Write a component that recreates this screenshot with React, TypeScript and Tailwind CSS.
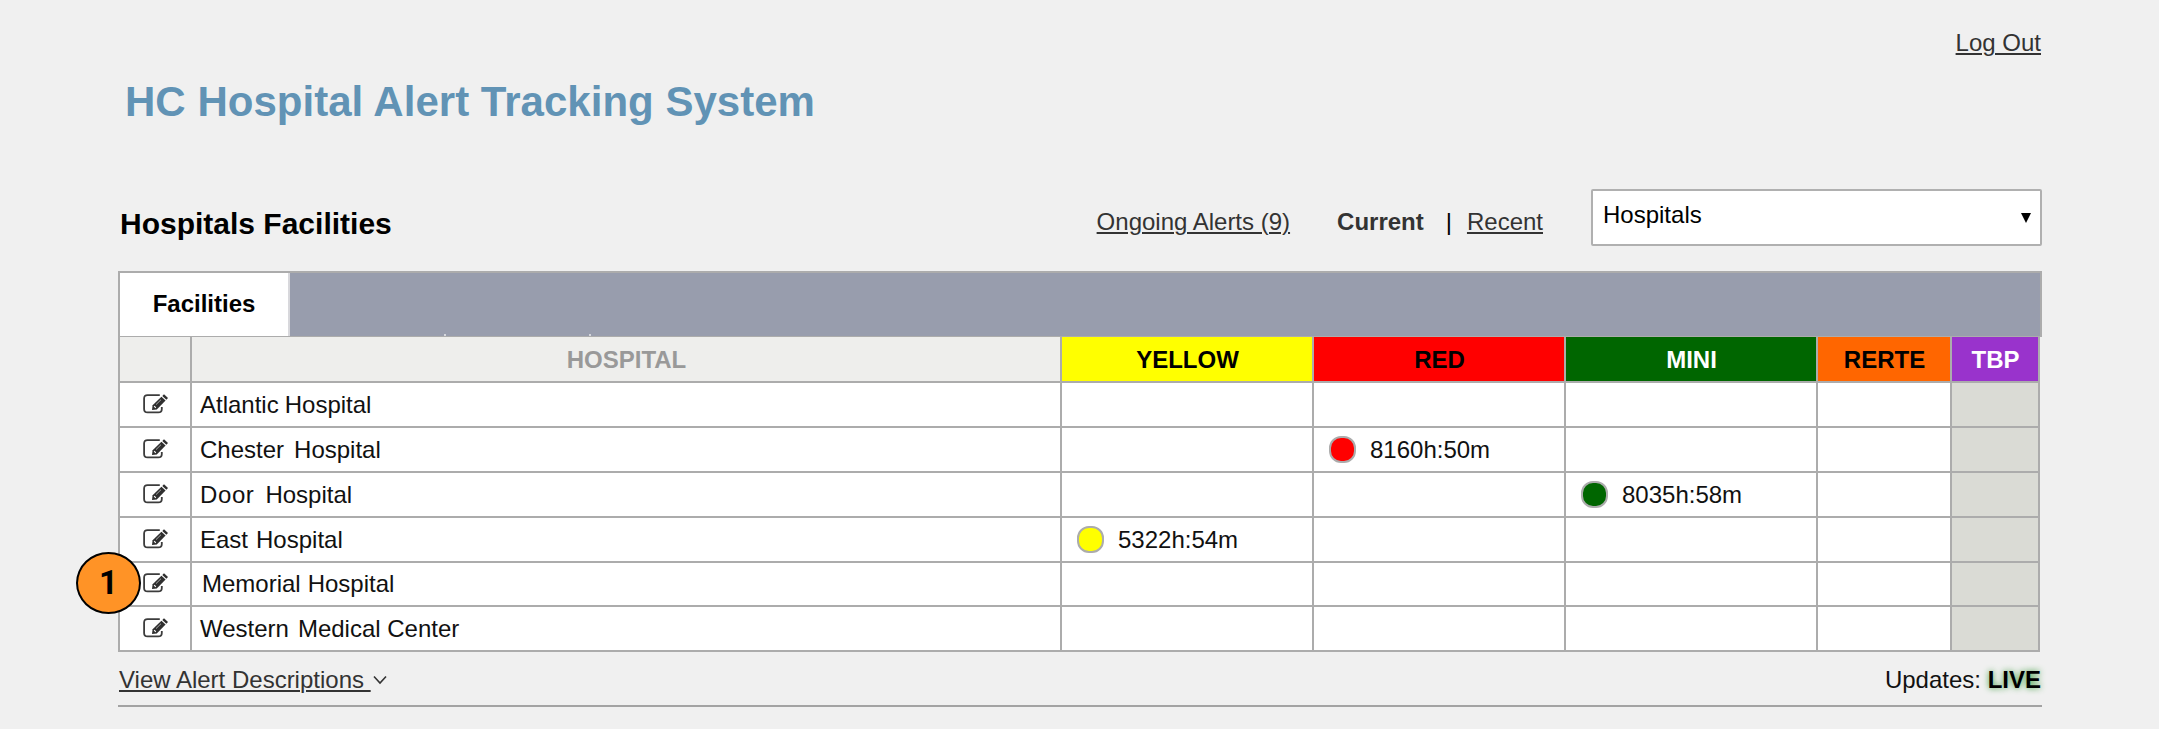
import React from "react";

type Level = "yellow" | "red" | "mini";

interface Facility {
  words: [string, string];
  gap: string;
  indent: string;
  alert?: { level: Level; time: string };
}

const facilities: Facility[] = [
  { words: ["Atlantic", "Hospital"], gap: "gap-[6px]", indent: "pl-[8px]" },
  { words: ["Chester", "Hospital"], gap: "gap-[10px]", indent: "pl-[8px]", alert: { level: "red", time: "8160h:50m" } },
  { words: ["Door", "Hospital"], gap: "gap-[11px]", indent: "pl-[8px] [&>span:first-child]:tracking-[0.6px]", alert: { level: "mini", time: "8035h:58m" } },
  { words: ["East", "Hospital"], gap: "gap-[8px]", indent: "pl-[8px]", alert: { level: "yellow", time: "5322h:54m" } },
  { words: ["Memorial", "Hospital"], gap: "gap-[7px]", indent: "pl-[10px]" },
  { words: ["Western", "Medical Center"], gap: "gap-[9px]", indent: "pl-[8px]" },
];

const rowHeights = ["h-[45px]", "h-[45px]", "h-[45px]", "h-[45px]", "h-[44px]", "h-[45px]"];

const dotColor: Record<Level, string> = {
  yellow: "bg-[#ffff00]",
  red: "bg-[#ff0000]",
  mini: "bg-[#006600]",
};

const columns = "grid grid-cols-[72px_870px_252px_252px_252px_134px_88px]";
const cell = "flex items-center border-r-2 border-b-2 border-[#acacac]";

function EditIcon() {
  return (
    <svg width="26" height="20" viewBox="0 0 26 20" fill="none">
      <path
        d="M16.8 1.1H4.6Q1.1 1.1 1.1 4.6V14.9Q1.1 18.4 4.6 18.4H15.3Q18.8 18.4 18.8 14.9V13"
        stroke="#3c3c3c"
        strokeWidth="1.8"
      />
      <path d="M9 16L9.6 11.2L18.4 2.7L22.6 6.6L13.8 15.4Z" fill="#2f2f2f" />
      <path d="M19.3 1.9L21 0.2L25 3.9L23.4 5.7Z" fill="#2f2f2f" />
      <path d="M11.2 12.2L12.8 13.8" stroke="#fff" strokeWidth="1.2" />
      <path d="M13 10.6L18 5.7" stroke="#ddd" strokeWidth="0.7" />
    </svg>
  );
}

function AlertCell({ level, facility }: { level: Level; facility: Facility }) {
  const alert = facility.alert;
  return (
    <div className={`${cell} bg-white pl-[15px]`}>
      {alert && alert.level === level && (
        <>
          <span className={`h-[27px] w-[27px] rounded-[12px] border-2 border-[#acacac] ${dotColor[level]}`} />
          <span className="pl-[14px]">{alert.time}</span>
        </>
      )}
    </div>
  );
}

export default function App() {
  return (
    <div className="h-[729px] w-[2159px] overflow-hidden bg-[#f0f0f0] pr-[117px] pl-[118px] font-['Liberation_Sans',Arial,sans-serif] text-[24px] leading-[28px] text-[#111]">
      <div className="flex h-[70px] justify-end pt-[29px] pr-px">
        <a className="h-7 text-[#333] underline decoration-2 underline-offset-2">Log Out</a>
      </div>
      <h1 className="h-[119px] pt-[8px] pl-[7px] text-[42px] leading-[48px] font-bold tracking-[0.02px] text-[#6193b5]">
        HC Hospital Alert Tracking System
      </h1>

      <div className="flex h-[82px] items-start">
        <h2 className="pt-[18px] pl-[2px] text-[30px] leading-[34px] font-bold text-black">Hospitals Facilities</h2>
        <div className="ml-auto flex pt-[19px] text-[#333]">
          <a className="mr-[47px] underline decoration-2 underline-offset-2">Ongoing Alerts (9)</a>
          <span className="mr-[22px] font-bold">Current</span>
          <span className="mr-[15px] text-black">|</span>
          <a className="mr-[48px] underline decoration-2 underline-offset-2">Recent</a>
        </div>
        <div className="flex h-[57px] w-[451px] justify-between rounded-[2px] border-2 border-[#b0b0b0] bg-white pt-[10px] pr-[9px] pl-[10px] text-black">
          <span>Hospitals</span>
          <svg className="mt-[12px]" width="10" height="10" viewBox="0 0 10 10">
            <path d="M0 0H10L5 10Z" fill="#000" />
          </svg>
        </div>
      </div>

      <div className="flex h-[66px] border-2 border-b-[1px] border-[#acacac] bg-[#989dad]">
        <div className="flex w-[170px] items-center justify-center border-r-2 border-[#d8d8dc] bg-white pb-[2px] font-bold text-black">
          Facilities
        </div>
        <span className="mt-auto ml-[154px] h-[2px] w-[2px] bg-[#d5d7dd]" />
        <span className="mt-auto ml-[143px] h-[2px] w-[2px] bg-[#d5d7dd]" />
      </div>

      <div className="w-[1922px] border-l-2 border-[#acacac]">
        <div className={`${columns} h-[46px] text-center font-bold text-black [&>div]:pt-[2px] [&>div]:pl-px`}>
          <div className={`${cell} bg-[#eeeeec]`} />
          <div className={`${cell} justify-center bg-[#eeeeec] text-[#999]`}>HOSPITAL</div>
          <div className={`${cell} justify-center bg-[#ffff00]`}>YELLOW</div>
          <div className={`${cell} justify-center bg-[#ff0000]`}>RED</div>
          <div className={`${cell} justify-center bg-[#006600] text-white`}>MINI</div>
          <div className={`${cell} justify-center bg-[#ff6600]`}>RERTE</div>
          <div className={`${cell} justify-center bg-[#9933cc] text-white`}>TBP</div>
        </div>
        {facilities.map((facility, i) => (
          <div key={i} className={`${columns} ${rowHeights[i]}`}>
            <div className={`${cell} bg-white pb-[2px] pl-[23px]`}>
              <EditIcon />
            </div>
            <div className={`${cell} bg-white ${facility.indent} ${facility.gap}`}>
              <span>{facility.words[0]}</span>
              <span>{facility.words[1]}</span>
            </div>
            <AlertCell level="yellow" facility={facility} />
            <AlertCell level="red" facility={facility} />
            <AlertCell level="mini" facility={facility} />
            <div className={`${cell} bg-white`} />
            <div className={`${cell} bg-[#dadbd5]`} />
          </div>
        ))}
      </div>

      <div className="flex h-[55px] w-[1924px] items-start border-b-2 border-[#a3a3a3] pt-[14px]">
        <a className="ml-px whitespace-pre text-[#333] underline decoration-2 underline-offset-2">{"View Alert Descriptions "}</a>
        <svg className="mt-[9px] ml-[2px]" width="14" height="10" viewBox="0 0 14 10" fill="none">
          <path d="M1 1.5L7 8L13 1.5" stroke="#333" strokeWidth="1.6" />
        </svg>
        <span className="ml-auto pr-px">
          Updates: <b className="text-black [text-shadow:0_0_6px_#3a9a3a]">LIVE</b>
        </span>
      </div>

      <div className="absolute top-[552px] left-[76px] flex h-[62px] w-[65px] items-center justify-center rounded-[50%] border-2 border-black bg-[#ff9326] font-[Roboto,'Liberation_Sans',sans-serif] text-[33px] font-bold text-black">
        1
      </div>
    </div>
  );
}
